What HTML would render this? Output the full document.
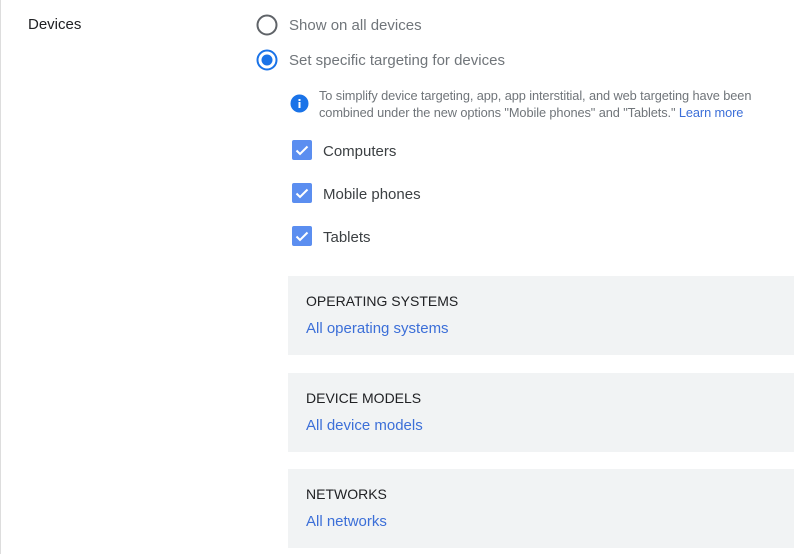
<!DOCTYPE html>
<html><head><style>
body{margin:0;width:800px;height:554px;background:#fff;font-family:"Liberation Sans",Arial,sans-serif;position:relative;overflow:hidden}
.a{position:absolute;white-space:nowrap}
.lb{font-size:15px;color:#3c4043}
.g{color:#70757a}
.box{position:absolute;left:288px;width:506px;height:79px;background:#f1f3f4}
.h{position:absolute;left:18px;top:17px;font-size:14px;color:#202124}
.l{position:absolute;left:18px;top:44px;font-size:15px;color:#3c6fd8}
.cb{position:absolute;left:292px;width:20px;height:20px;background:#5b8ef0;border-radius:2px}
</style></head><body>
<div style="position:absolute;left:0;top:0;width:1px;height:554px;background:#ddd"></div>
<div class="a lb" style="left:28px;top:16px;color:#202124">Devices</div>
<svg class="a" style="left:256px;top:14px" width="22" height="22"><circle cx="11" cy="11" r="9.5" fill="none" stroke="#5f6368" stroke-width="2"/></svg>
<div class="a lb g" style="left:289px;top:17px">Show on all devices</div>
<svg class="a" style="left:256px;top:49px" width="22" height="22"><circle cx="11" cy="11" r="9.5" fill="none" stroke="#1a73e8" stroke-width="2"/><circle cx="11" cy="11" r="5.5" fill="#1a73e8"/></svg>
<div class="a lb g" style="left:289px;top:52px">Set specific targeting for devices</div>
<svg class="a" style="left:290px;top:94px" width="19" height="19"><circle cx="9.5" cy="9.5" r="9" fill="#1a73e8"/><rect x="8.5" y="8" width="2" height="6" fill="#fff"/><rect x="8.5" y="5" width="2" height="2" fill="#fff"/></svg>
<div class="a g" style="left:319px;top:87px;font-size:12.8px;line-height:17px;letter-spacing:-0.1px">To simplify device targeting, app, app interstitial, and web targeting have been<br>combined under the new options "Mobile phones" and "Tablets." <span style="color:#3c6fd8">Learn more</span></div>
<div class="cb" style="top:140px"></div><svg class="a" style="left:292px;top:140px" width="20" height="20"><path d="M4.5 10.5l3.5 3.5 7.5-7.5" fill="none" stroke="#fff" stroke-width="2"/></svg>
<div class="a lb" style="left:323px;top:143px">Computers</div>
<div class="cb" style="top:183px"></div><svg class="a" style="left:292px;top:183px" width="20" height="20"><path d="M4.5 10.5l3.5 3.5 7.5-7.5" fill="none" stroke="#fff" stroke-width="2"/></svg>
<div class="a lb" style="left:323px;top:186px">Mobile phones</div>
<div class="cb" style="top:226px"></div><svg class="a" style="left:292px;top:226px" width="20" height="20"><path d="M4.5 10.5l3.5 3.5 7.5-7.5" fill="none" stroke="#fff" stroke-width="2"/></svg>
<div class="a lb" style="left:323px;top:229px">Tablets</div>
<div class="box" style="top:276px"><div class="h">OPERATING SYSTEMS</div><div class="l">All operating systems</div></div>
<div class="box" style="top:373px"><div class="h">DEVICE MODELS</div><div class="l">All device models</div></div>
<div class="box" style="top:469px"><div class="h">NETWORKS</div><div class="l">All networks</div></div>
</body></html>
